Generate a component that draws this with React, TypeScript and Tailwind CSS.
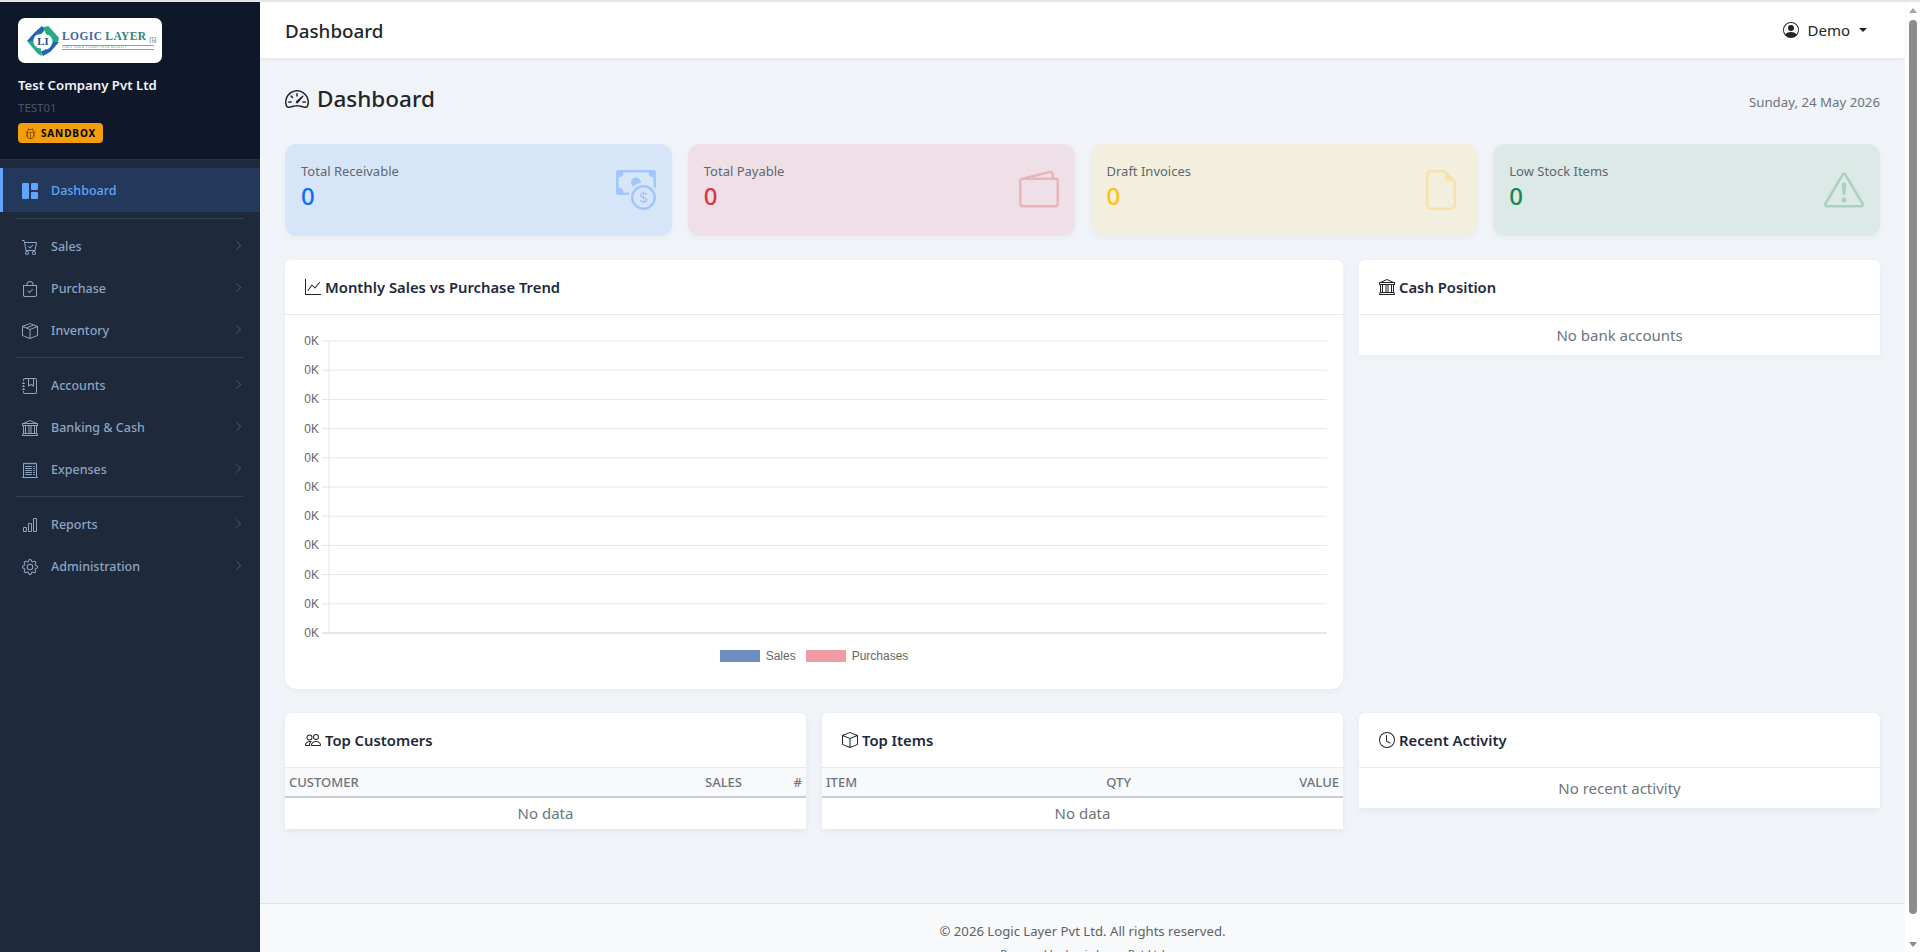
import type { ComponentType, ReactNode } from 'react';
import {
  BsBagCheck,
  BsBank,
  BsBarChart,
  BsBoxSeam,
  BsBox,
  BsBug,
  BsCartCheck,
  BsCashCoin,
  BsChevronRight,
  BsClock,
  BsExclamationTriangle,
  BsFileEarmark,
  BsGear,
  BsGraphUp,
  BsGrid1X2Fill,
  BsJournalBookmark,
  BsPeople,
  BsPersonCircle,
  BsReceiptCutoff,
  BsSpeedometer2,
  BsWallet2,
} from 'react-icons/bs';

type Icon = ComponentType<{ className?: string }>;

const navGroups: { label: string; icon: Icon }[][] = [
  [
    { label: 'Sales', icon: BsCartCheck },
    { label: 'Purchase', icon: BsBagCheck },
    { label: 'Inventory', icon: BsBoxSeam },
  ],
  [
    { label: 'Accounts', icon: BsJournalBookmark },
    { label: 'Banking & Cash', icon: BsBank },
    { label: 'Expenses', icon: BsReceiptCutoff },
  ],
  [
    { label: 'Reports', icon: BsBarChart },
    { label: 'Administration', icon: BsGear },
  ],
];

const stats = [
  { label: 'Total Receivable', icon: BsCashCoin, box: 'bg-[#d7e5f9]', text: 'text-[#0d6efd]' },
  { label: 'Total Payable', icon: BsWallet2, box: 'bg-[#efe0e7]', text: 'text-[#dc3545]' },
  { label: 'Draft Invoices', icon: BsFileEarmark, box: 'bg-[#f2efdf]', text: 'text-[#ffc107]' },
  { label: 'Low Stock Items', icon: BsExclamationTriangle, box: 'bg-[#dce9e7]', text: 'text-[#198754]' },
];

const gridLines = Array.from({ length: 11 }, (_, i) => 26 + i * 29.2);

function Logo() {
  return (
    <div className="flex h-[45px] w-[144px] items-center gap-[3px] rounded-[7px] bg-white pl-[9px]">
      <svg viewBox="0 0 30 28" className="h-[30px] w-[32px] shrink-0">
        <path d="M0 14 L7 6 L14 0 L17 3 L14 7 L11 8 C8 8 7 10 6 13 L5 17 Z" fill="#1f66b5" />
        <path d="M15 1 L20 0 L30 11 L29 15 L24 15 C24 11 21 8 18 8 Z" fill="#27a98a" />
        <path d="M24 15 L30 15 L22 24 L15 28 L13 24 L17 22 C21 22 23 19 24 15 Z" fill="#1f66b5" />
        <path d="M0 14 L6 14 C6 18 9 21 13 21 L14 28 L10 26 Z" fill="#27a98a" />
        <text x="15" y="18" textAnchor="middle" fontSize="10" fontWeight="700" fill="#1d4f86" fontFamily="Liberation Serif, serif">
          LI
        </text>
      </svg>
      <div className="flex w-[92px] flex-col font-['Liberation_Serif',serif] leading-none">
        <div className="flex items-baseline gap-[3px] text-[11.5px] font-bold tracking-[0.4px]">
          <span className="text-[#3e66a8]">LOGIC</span>
          <span className="text-[#36807f]">LAYER</span>
          <span className="text-[3px] text-[#36807f]">PVT. LTD</span>
        </div>
        <div className="mt-[1px] overflow-hidden border-y border-[#8e9cc4] text-[3px] leading-[3px] tracking-[0.55px] whitespace-nowrap text-[#36807f]">
          TURN YOUR VISION INTO REALITY
        </div>
      </div>
    </div>
  );
}

function NavItem({ label, icon: IconCmp }: { label: string; icon: Icon }) {
  return (
    <div className="flex h-[42px] items-center pt-[2px] pr-[16px] pl-[22px] text-[#8ea4c0]">
      <IconCmp className="size-4 shrink-0" />
      <span className="ml-[13px] flex-1 text-[12.5px] font-medium">{label}</span>
      <BsChevronRight className="size-[11px] -translate-y-[2px] text-[#56657c]" />
    </div>
  );
}

function Sidebar() {
  return (
    <aside className="flex w-[260px] shrink-0 flex-col bg-[#1e293b]">
      <div className="h-[158px] border-b border-[#263246] bg-[#0f172a] px-[18px] pt-4">
        <Logo />
        <div className="mt-3 text-[13.2px] leading-5 font-semibold text-[#f1f5f9]">Test Company Pvt Ltd</div>
        <div className="mt-[5px] text-[11.5px] leading-4 text-[#475569]">TEST01</div>
        <div className="mt-[7px] flex h-5 w-[85px] items-center justify-center gap-[5px] rounded-[4px] bg-[#f59e0b] text-[10px] font-bold tracking-[0.9px] text-black">
          <BsBug className="size-[11px] text-[#6b3f08]" />
          SANDBOX
        </div>
      </div>
      <nav className="pt-2">
        <div className="flex h-[44px] items-center border-l-[3px] border-[#60a5fa] bg-[#24385b] pt-[2px] pl-[19px] text-[#60a5fa]">
          <BsGrid1X2Fill className="size-4" />
          <span className="ml-[13px] text-[12.5px] font-medium">Dashboard</span>
        </div>
        {navGroups.map((group) => (
          <div key={group[0].label}>
            <div className="mx-4 my-[6px] border-t border-[#334155]" />
            {group.map((item) => (
              <NavItem key={item.label} label={item.label} icon={item.icon} />
            ))}
          </div>
        ))}
      </nav>
    </aside>
  );
}

function StatCard({ label, icon: IconCmp, box, text }: (typeof stats)[number]) {
  return (
    <div className={`flex h-[92px] items-start justify-between rounded-xl px-4 pt-[17px] shadow-[0_2px_6px_rgba(0,0,0,0.04)] ${box}`}>
      <div>
        <div className="text-[13px] leading-5 text-[#5f6770]">{label}</div>
        <div className={`text-[24px] leading-[30px] font-medium ${text}`}>0</div>
      </div>
      <IconCmp className={`mt-[9px] size-10 opacity-25 ${text}`} />
    </div>
  );
}

function CardHeader({ icon: IconCmp, children }: { icon: Icon; children: ReactNode }) {
  return (
    <div className="flex h-[55px] items-center border-b border-[#e4e9f2] pl-5 text-[14.8px] font-semibold text-[#1e293b]">
      <IconCmp className="mr-1 size-4 text-[#212529]" />
      {children}
    </div>
  );
}

function Chart() {
  return (
    <div className="pb-[27px]">
      <svg width="1058" height="325" className="block">
        <line x1="44" x2="44" y1="26" y2="318" stroke="#e5e5e5" />
        {gridLines.map((y, i) => (
          <g key={y}>
            <line x1="37" x2="1042" y1={y} y2={y} stroke={i === 10 ? '#cfcfcf' : '#e5e5e5'} />
            <text x="34" y={y + 4} textAnchor="end" fontSize="12" fill="#666" fontFamily="Liberation Sans, Arial, sans-serif">
              0K
            </text>
          </g>
        ))}
      </svg>
      <div className="mt-[10px] flex items-center justify-center gap-[10px] font-['Liberation_Sans',sans-serif] text-[12px] leading-3 text-[#666]">
        <span className="flex items-center gap-[6px]">
          <span className="h-3 w-10 bg-[#6c8ebf]" />
          Sales
        </span>
        <span className="flex items-center gap-[6px]">
          <span className="h-3 w-10 bg-[#ee9ba5]" />
          Purchases
        </span>
      </div>
    </div>
  );
}

function DataTable({ columns, widths }: { columns: string[]; widths: string[] }) {
  return (
    <table className="w-full table-fixed">
      <thead>
        <tr className="h-[29px] border-b-2 border-[#c9ccd0] bg-[#f8f9fa] text-[13px] text-[#6c757d]">
          {columns.map((col, i) => (
            <th key={col} className={`px-1 pt-[2px] font-medium ${widths[i]} ${i === 0 ? 'text-left' : 'text-right'}`}>
              {col}
            </th>
          ))}
        </tr>
      </thead>
      <tbody>
        <tr>
          <td colSpan={columns.length} className="h-[32px] text-center text-[15px] text-[#6c757d]">
            No data
          </td>
        </tr>
      </tbody>
    </table>
  );
}

function Scrollbar() {
  return (
    <div className="flex w-[15px] shrink-0 flex-col items-center bg-white">
      <div className="mt-[6px] size-0 border-x-[4.5px] border-b-[5px] border-x-transparent border-b-[#a3a3a3]" />
      <div className="mt-[7px] h-[894px] w-[8px] rounded-full bg-[#8c8c8c]" />
      <div className="mt-[28px] size-0 border-x-[4.5px] border-t-[5px] border-x-transparent border-t-[#8c8c8c]" />
    </div>
  );
}

export default function App() {
  return (
    <div className="flex h-screen overflow-hidden border-t-2 border-[#e5e5e5] bg-white font-['Noto_Sans',sans-serif]">
      <Sidebar />
      <main className="flex min-w-0 flex-1 flex-col">
        <header className="z-10 flex h-[56px] shrink-0 items-center justify-between bg-white pr-[38px] pl-[26px] shadow-[0_1px_3px_rgba(0,0,0,0.08)]">
          <h1 className="-ml-px pt-[3px] text-[18.8px] font-medium text-[#212529]">Dashboard</h1>
          <div className="flex items-center text-[15px] text-[#212529]">
            <BsPersonCircle className="size-4" />
            <span className="ml-[8px]">Demo</span>
            <span className="ml-[9px] size-0 border-x-[4px] border-t-[4.5px] border-x-transparent border-t-[#212529]" />
          </div>
        </header>

        <div className="h-[845px] shrink-0 bg-[#f0f3f8] px-[25px] pt-6">
          <div className="flex h-8 items-center justify-between">
            <h2 className="flex items-center pt-[2px] text-[22.5px] font-medium text-[#212529]">
              <BsSpeedometer2 className="mr-[8px] size-6" />
              Dashboard
            </h2>
            <span className="mt-[10px] text-[13.25px] text-[#6c757d]">Sunday, 24 May 2026</span>
          </div>

          <div className="mt-[30px] grid grid-cols-4 gap-4">
            {stats.map((s) => (
              <StatCard key={s.label} {...s} />
            ))}
          </div>

          <div className="mt-6 grid grid-cols-3 gap-4">
            <section className="col-span-2 rounded-t-[6px] rounded-b-xl bg-white shadow-[0_2px_6px_rgba(0,0,0,0.04)]">
              <CardHeader icon={BsGraphUp}>Monthly Sales vs Purchase Trend</CardHeader>
              <Chart />
            </section>
            <section className="self-start rounded-t-[6px] bg-white shadow-[0_2px_6px_rgba(0,0,0,0.04)]">
              <CardHeader icon={BsBank}>Cash Position</CardHeader>
              <div className="flex h-10 items-center justify-center text-[15px] text-[#6c757d]">No bank accounts</div>
            </section>
          </div>

          <div className="mt-6 grid grid-cols-3 items-start gap-4">
            <section className="rounded-t-[6px] bg-white shadow-[0_2px_6px_rgba(0,0,0,0.06)]">
              <CardHeader icon={BsPeople}>Top Customers</CardHeader>
              <DataTable columns={['CUSTOMER', 'SALES', '#']} widths={['', 'w-[120px]', 'w-[60px]']} />
            </section>
            <section className="rounded-t-[6px] bg-white shadow-[0_2px_6px_rgba(0,0,0,0.06)]">
              <CardHeader icon={BsBox}>Top Items</CardHeader>
              <DataTable columns={['ITEM', 'QTY', 'VALUE']} widths={['', 'w-[101px]', 'w-[208px]']} />
            </section>
            <section className="rounded-t-[6px] bg-white shadow-[0_2px_6px_rgba(0,0,0,0.06)]">
              <CardHeader icon={BsClock}>Recent Activity</CardHeader>
              <div className="flex h-10 items-center justify-center text-[15px] text-[#6c757d]">No recent activity</div>
            </section>
          </div>
        </div>

        <footer className="shrink-0 border-t border-[#dee2e6] bg-[#f8f9fa] pt-[17px] text-center text-[13.15px] leading-5 text-[#5c636a]">
          <div>© 2026 Logic Layer Pvt Ltd. All rights reserved.</div>
          <div className="mt-[3px] text-[11.3px]">Powered by Logic Layer Pvt Ltd</div>
        </footer>
      </main>
      <Scrollbar />
    </div>
  );
}
